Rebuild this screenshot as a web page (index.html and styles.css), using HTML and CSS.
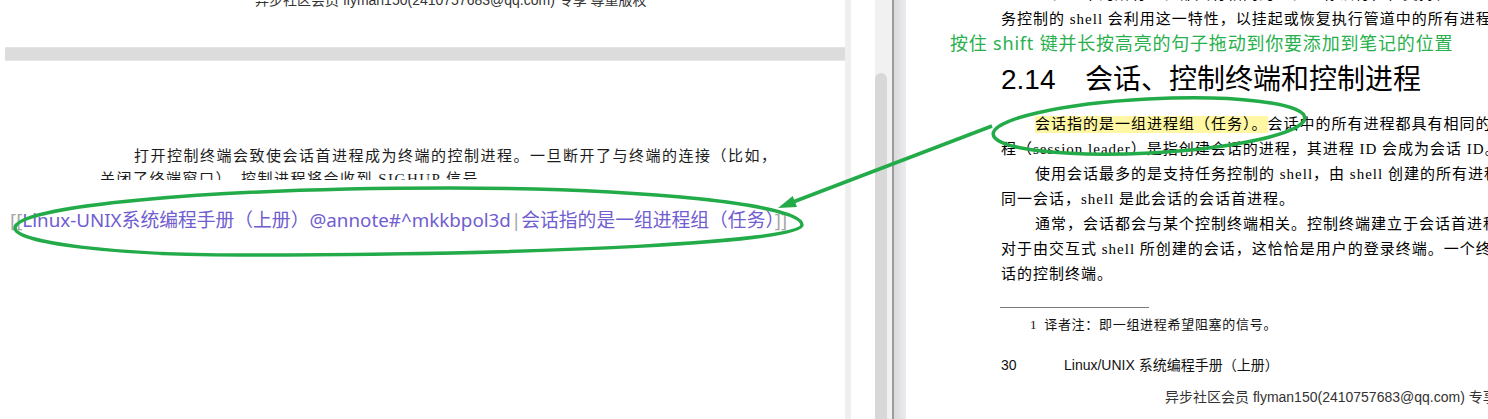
FILE: index.html
```html
<!DOCTYPE html>
<html lang="zh-CN">
<head>
<meta charset="utf-8">
<title>Annotation</title>
<link rel="stylesheet" href="styles.css">
</head>
<body>
<div class="screen">
  <section class="left">
    <div class="pdf">
      <div class="page-prev">
        <p class="wm">异步社区会员 flyman150(2410757683@qq.com) 专享 尊重版权</p>
      </div>
      <div class="page-gap"></div>
      <div class="page-next">
        <p class="pl indent">打开控制终端会致使会话首进程成为终端的控制进程。一旦断开了与终端的连接（比如，</p>
        <p class="pl">关闭了终端窗口），控制进程将会收到 SIGHUP 信号</p>
      </div>
    </div>
    <p class="link"><span class="br">[[</span><span class="lk">Linux-UNIX系统编程手册（上册）@annote#^mkkbpol3d</span><span class="br">|</span><span class="lk">会话指的是一组进程组（任务）</span><span class="br">]]</span></p>
  </section>
  <div class="split"></div>
  <div class="gutter"></div>
  <div class="scroll"><div class="thumb"></div></div>
  <div class="divider"></div>
  <section class="right">
    <p class="rl first indent">进程组中的所有进程都具有相同的进程组标识符，在支持任</p>
    <p class="rl">务控制的 shell 会利用这一特性，以挂起或恢复执行管道中的所有进程。</p>
    <h2 class="h"><span class="num">2.14</span>会话、控制终端和控制进程</h2>
    <p class="rl indent"><span class="hl">会话指的是一组进程组（任务）。</span>会话中的所有进程都具有相同的会话标识符。会话首进</p>
    <p class="rl">程（session leader）是指创建会话的进程，其进程 ID 会成为会话 ID。</p>
    <p class="rl indent">使用会话最多的是支持任务控制的 shell，由 shell 创建的所有进程组与 shell 自身隶属于</p>
    <p class="rl">同一会话，shell 是此会话的会话首进程。</p>
    <p class="rl indent">通常，会话都会与某个控制终端相关。控制终端建立于会话首进程初次打开终端设备之时。</p>
    <p class="rl">对于由交互式 shell 所创建的会话，这恰恰是用户的登录终端。一个终端至多可成为一个会</p>
    <p class="rl">话的控制终端。</p>
    <div class="rule"></div>
    <p class="fn"><span class="fnum">1</span>译者注：即一组进程希望阻塞的信号。</p>
    <p class="pg"><span class="pnum">30</span>Linux/UNIX 系统编程手册（上册）</p>
    <p class="foot">异步社区会员 flyman150(2410757683@qq.com) 专享 尊重版权</p>
  </section>

  <div class="hint">按住 shift 键并长按高亮的句子拖动到你要添加到笔记的位置</div>
  <svg class="marks" width="1488" height="419" viewBox="0 0 1488 419" xmlns="http://www.w3.org/2000/svg">
    <path d="M802 225 C802 204.6 644 188 450 188 C210 188 15 206 15 228 C15 243 116 255 240 255 C550 255 802 242 802 225 Z" fill="none" stroke="#22ab48" stroke-width="3.5"/>
    <ellipse cx="1149" cy="126" rx="156" ry="27" transform="rotate(-3 1149 126)" fill="none" stroke="#22ab48" stroke-width="3.5"/>
    <line x1="992" y1="126" x2="793" y2="202" stroke="#22ab48" stroke-width="3.5"/>
    <polygon points="778,208 797,207 792.7,196" fill="#22ab48"/>
  </svg>
</div>
</body>
</html>
```

FILE: styles.css
```css
html, body {
  margin: 0;
  padding: 0;
  background: #fff;
}

.screen {
  position: relative;
  display: flex;
  width: 1488px;
  height: 419px;
  overflow: hidden;
  background: #fff;
}

p { margin: 0; }

/* ---------- left pane ---------- */
.left {
  width: 845px;
  flex: none;
  overflow: hidden;
}

.pdf {
  margin-left: 5px;
  height: 180px;
  overflow: hidden;
}

.page-prev {
  height: 47px;
  overflow: hidden;
}

.wm {
  margin: -10px 0 0 250px;
  font: 14px/20px "Liberation Sans", "Noto Sans CJK SC", sans-serif;
  color: #333;
  white-space: nowrap;
}

.page-gap {
  height: 12px;
  background: #dcdcdc;
  border-top: 1px solid #e3e3e3;
  border-bottom: 1px solid #e9e9e9;
}

.page-next {
  padding: 84px 0 0 95px;
}

.pl {
  font: 15px/23px "Liberation Serif", "Noto Sans CJK SC", serif;
  letter-spacing: 1.5px;
  color: #1c1c1c;
  white-space: nowrap;
}

.pl.indent { text-indent: 34px; }

.link {
  margin: 28px 0 0 10px;
  font: 18.8px/24px "Noto Sans", "Noto Sans CJK SC", sans-serif;
  white-space: nowrap;
}

.br { color: #a5a5a5; }
.lk { color: #705dcf; }

/* ---------- splitter / scrollbar ---------- */
.split {
  width: 6px;
  flex: none;
  background: #efefef;
}

.gutter {
  width: 24px;
  flex: none;
}

.scroll {
  width: 17px;
  flex: none;
  display: flex;
  flex-direction: column;
  background: #f1f1f1;
}

.thumb {
  margin-top: 73px;
  flex: 1;
  width: 12px;
  background: #d8d8d8;
  border-radius: 6px 6px 0 0;
}

.divider {
  width: 14px;
  flex: none;
  background: linear-gradient(to right, #9c9c9c 0, #9c9c9c 2px, #dadadd 2px, #ececee 100%);
}

/* ---------- right pane ---------- */
.right {
  flex: 1;
  min-width: 0;
  padding-left: 95px;
  overflow: hidden;
}

.rl {
  font: 15px/25px "Liberation Serif", "Noto Sans CJK SC", serif;
  letter-spacing: 1px;
  color: #000;
  white-space: nowrap;
}

.rl.first { margin-top: -18px; }
.rl.indent { text-indent: 34px; }

.hl {
  display: inline-block;
  text-indent: 0;
  line-height: 17px;
  background: #fff7a3;
}

.h {
  margin: 28px 0 11.5px;
  font: 400 28px/40px "Liberation Sans", "Noto Sans CJK SC", sans-serif;
  color: #000;
  white-space: nowrap;
}

.num {
  display: inline-block;
  width: 84px;
}

.rule {
  width: 149px;
  height: 1px;
  margin: 20px 0 0 -1px;
  background: #7a7a7a;
}

.fn {
  margin: 7px 0 0 29px;
  font: 13px/20px "Liberation Serif", "Noto Sans CJK SC", serif;
  letter-spacing: 0.7px;
  color: #111;
  white-space: nowrap;
}

.fnum { margin-right: 7px; }

.pg {
  margin-top: 20px;
  font: 14px/20px "Liberation Sans", "Noto Sans CJK SC", sans-serif;
  color: #111;
  white-space: nowrap;
}

.pnum {
  display: inline-block;
  width: 63px;
}

.foot {
  margin: 12px 0 0 164px;
  font: 14px/20px "Liberation Sans", "Noto Sans CJK SC", sans-serif;
  color: #333;
  white-space: nowrap;
}

/* ---------- annotation overlay ---------- */
.hint {
  position: absolute;
  left: 950px;
  top: 31px;
  font: 18px/24px "Noto Sans", "Noto Sans CJK SC", sans-serif;
  letter-spacing: 0.8px;
  color: #28b04c;
  white-space: nowrap;
}

.marks {
  position: absolute;
  left: 0;
  top: 0;
  pointer-events: none;
}
```
